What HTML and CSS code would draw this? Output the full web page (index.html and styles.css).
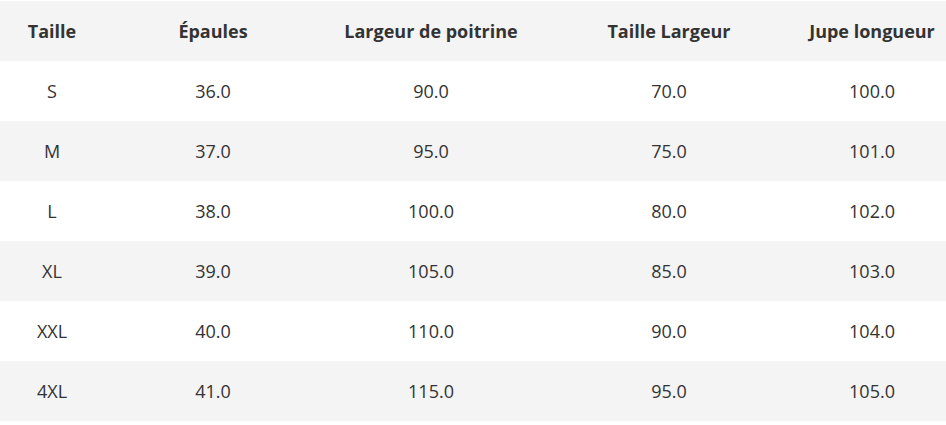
FILE: index.html
```html
<!DOCTYPE html>
<html lang="fr">
<head>
<meta charset="utf-8">
<link rel="stylesheet" href="styles.css">
</head>
<body>
<table class="size-table">
  <colgroup>
    <col class="c-size">
    <col class="c-shoulder">
    <col class="c-chest">
    <col class="c-waist">
    <col class="c-length">
  </colgroup>
  <thead>
    <tr><th>Taille</th><th>Épaules</th><th>Largeur de poitrine</th><th>Taille Largeur</th><th>Jupe longueur</th></tr>
  </thead>
  <tbody>
    <tr><td>S</td><td>36.0</td><td>90.0</td><td>70.0</td><td>100.0</td></tr>
    <tr><td>M</td><td>37.0</td><td>95.0</td><td>75.0</td><td>101.0</td></tr>
    <tr><td>L</td><td>38.0</td><td>100.0</td><td>80.0</td><td>102.0</td></tr>
    <tr><td>XL</td><td>39.0</td><td>105.0</td><td>85.0</td><td>103.0</td></tr>
    <tr><td>XXL</td><td>40.0</td><td>110.0</td><td>90.0</td><td>104.0</td></tr>
    <tr><td>4XL</td><td>41.0</td><td>115.0</td><td>95.0</td><td>105.0</td></tr>
  </tbody>
</table>
</body>
</html>
```
FILE: styles.css
```css
html, body {
  margin: 0;
  padding: 0;
  background: #fff;
}
body {
  padding-top: 1px;
  font-family: "Open Sans", "Liberation Sans", sans-serif;
  color: #333;
}
.size-table {
  width: 946px;
  table-layout: fixed;
  border-collapse: collapse;
  font-size: 18px;
}
.c-size { width: 104px; }
.c-shoulder { width: 218px; }
.c-chest { width: 218px; }
.c-waist { width: 258px; }
.c-length { width: 148px; }
.size-table th,
.size-table td {
  height: 60px;
  padding: 0;
  text-align: center;
  vertical-align: middle;
  white-space: nowrap;
  box-sizing: border-box;
}
.size-table th {
  font-weight: 700;
}
.size-table thead tr,
.size-table tbody tr:nth-child(even) {
  background: #f4f4f4;
}
```
